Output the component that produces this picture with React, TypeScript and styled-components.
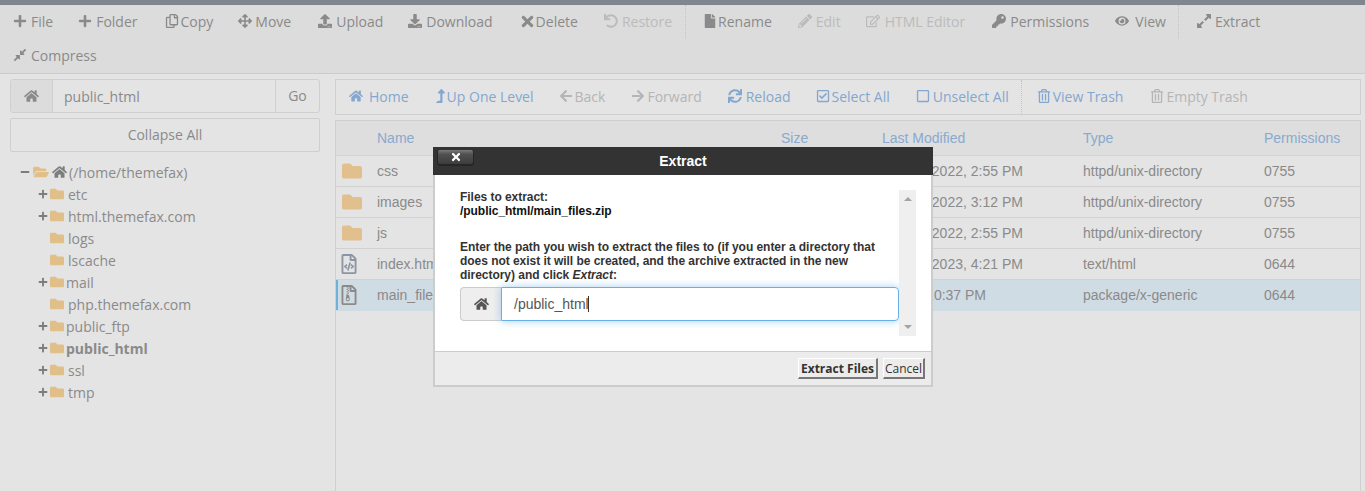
import * as React from 'react';
import styled, { createGlobalStyle } from 'styled-components';
import {
	FaPlus, FaRegCopy, FaArrowsAlt, FaUpload, FaDownload, FaTimes, FaUndo, FaFile, FaPencilAlt, FaRegEdit, FaKey, FaEye,
	FaExpandAlt, FaCompressAlt, FaHome, FaLevelUpAlt, FaArrowLeft, FaArrowRight, FaSync, FaRegCheckSquare, FaRegSquare,
	FaRegTrashAlt, FaFolder, FaFolderOpen, FaRegFileCode, FaRegFileArchive, FaMinus,
} from 'react-icons/fa';

const GlobalStyle = createGlobalStyle`
	html, body { margin: 0; padding: 0; height: 100%; overflow: hidden; background: #e4e4e4; }
	#root { height: 491px; }
`;

const Page = styled.div`
	position: relative;
	height: 491px;
	width: 1365px;
	overflow: hidden;
	border-top: 5px solid #7f868f;
	box-sizing: border-box;
	font-family: 'Open Sans', sans-serif;
	font-size: 14px;
	color: #8a8a8a;
`;
const TopToolbar = styled.div`
	display: flex;
	flex-wrap: wrap;
	align-content: flex-start;
	height: 69px;
	box-sizing: border-box;
	background: #dcdcdc;
	border-bottom: 1px solid #cbcbcb;
`;
const ToolItem = styled.span<{ $off?: boolean; $pad: number }>`
	display: inline-flex;
	align-items: center;
	height: 34px;
	box-sizing: border-box;
	padding: 0 0 2px ${p => p.$pad}px;
	color: ${p => (p.$off ? '#bbbbbb' : '#8a8a8a')};
	white-space: nowrap;
`;
const IconSlot = styled.span<{ $w: number; $h?: number }>`
	flex: none;
	display: flex;
	align-items: center;
	width: ${p => p.$w}px;
	svg { height: ${p => p.$h ?? 14}px; width: auto; }
`;
const BarDivider = styled.span<{ $pad: number }>`
	width: 0;
	height: 34px;
	margin-left: ${p => p.$pad}px;
	border-left: 1px dotted #c4c4c4;
`;
const RowBreak = styled.span`
	flex-basis: 100%;
	height: 0;
`;
const Body = styled.div`
	display: flex;
	align-items: flex-start;
	padding: 5px 4px 0 10px;
	gap: 15px;
`;
const Sidebar = styled.div`
	width: 310px;
	flex: none;
`;
const PathGroup = styled.div`
	display: flex;
	height: 34px;
	box-sizing: border-box;
	border: 1px solid #cfcfcf;
	border-radius: 3px;
`;
const PathAddon = styled.span`
	width: 41px;
	display: flex;
	align-items: center;
	justify-content: center;
	background: #dcdcdc;
	border-right: 1px solid #cfcfcf;
	svg { width: 15px; height: 14px; }
`;
const PathInput = styled.span`
	flex: 1;
	padding-left: 11px;
	line-height: 34px;
`;
const GoButton = styled.span`
	width: 43px;
	text-align: center;
	line-height: 32px;
	border-left: 1px solid #cfcfcf;
`;
const CollapseButton = styled.div`
	margin-top: 5px;
	height: 34px;
	box-sizing: border-box;
	border: 1px solid #cfcfcf;
	border-radius: 2px;
	text-align: center;
	line-height: 31px;
`;
const Tree = styled.ul`
	list-style: none;
	margin: 9px 0 0;
	padding: 0 0 0 10px;
`;
const TreeRow = styled.li<{ $bold?: boolean; $root?: boolean }>`
	display: flex;
	align-items: center;
	height: 22px;
	font-weight: ${p => (p.$bold ? 700 : 400)};
	padding-left: ${p => (p.$root ? 0 : 18)}px;
`;
const Toggle = styled.span`
	width: 12px;
	display: flex;
	align-items: center;
	color: #7d7d7d;
	svg { width: 10px; height: 10px; }
`;
const TreeFolder = styled.span<{ $tight?: boolean }>`
	display: flex;
	margin-right: ${p => (p.$tight ? 2 : 4)}px;
	color: #e1bf89;
	svg { width: 14px; height: 14px; }
`;
const RootIcons = styled.span`
	display: flex;
	align-items: center;
	gap: 2px;
	margin-right: 2px;
	svg:first-child { width: 18px; height: 14px; color: #e1bf89; }
	svg:last-child { width: 15px; height: 14px; color: #7d7d7d; }
`;
const Main = styled.div`
	flex: 1;
	min-width: 0;
`;
const FileToolbar = styled.div`
	display: flex;
	height: 36px;
	box-sizing: border-box;
	border: 1px solid #cfcfcf;
`;
const LinkItem = styled(ToolItem)<{ $off?: boolean }>`
	color: ${p => (p.$off ? '#b5b5b5' : '#83a7cf')};
`;
const FilePanel = styled.div`
	margin-top: 5px;
	height: 380px;
	border: 1px solid #cfcfcf;
	border-bottom: 0;
	font-family: 'Liberation Sans', Arial, sans-serif;
`;
const Row = styled.div<{ $head?: boolean; $selected?: boolean }>`
	display: grid;
	grid-template-columns: 41px 404px 101px 201px 181px 1fr;
	align-items: center;
	height: ${p => (p.$head ? 34 : 30)}px;
	border-bottom: 1px solid ${p => (p.$selected ? '#d0dce4' : '#d2d2d2')};
	background: ${p => (p.$head ? '#dedede' : p.$selected ? '#d0dce4' : 'transparent')};
	color: ${p => (p.$head ? '#8aa9cf' : '#8a8a8a')};
	box-shadow: ${p => (p.$selected ? 'inset 2px 0 0 #6eb2d6' : 'none')};
`;
const FileIcon = styled.span<{ $folder?: boolean; $zip?: boolean }>`
	display: flex;
	justify-content: center;
	padding-right: ${p => (p.$folder ? 10 : 16)}px;
	color: ${p => (p.$folder ? '#e1c08d' : p.$zip ? '#8c8a88' : '#8d94a3')};
	svg { width: ${p => (p.$folder ? 20 : 16)}px; height: 20px; }
`;
const Overlay = styled.div`
	position: absolute;
	left: 433px;
	top: 142px;
	width: 500px;
	height: 240px;
	box-sizing: border-box;
	display: flex;
	flex-direction: column;
	font-family: 'Liberation Sans', Arial, sans-serif;
	border: 2px solid #cccccc;
	border-top: 0;
	background: #ffffff;
`;
const ModalHead = styled.div`
	position: relative;
	height: 28px;
	margin: 0 -2px;
	background: #333333;
	color: #ffffff;
	font-size: 14px;
	font-weight: 700;
	text-align: center;
	line-height: 28px;
`;
const CloseButton = styled.span`
	position: absolute;
	left: 5px;
	top: 3px;
	width: 35px;
	height: 14px;
	display: flex;
	align-items: center;
	justify-content: center;
	border-radius: 2px;
	background: linear-gradient(#7c7c7c, #505050 30%, #3d3d3d);
	box-shadow: 0 1px 0 1px #262626;
	svg { width: 12px; height: 12px; color: #ffffff; }
`;
const ModalBody = styled.div`
	flex: 1;
	position: relative;
	padding: 15px 32px 0 25px;
	font-size: 12px;
	font-weight: 700;
	line-height: 14px;
	letter-spacing: -0.04px;
	color: #333333;
`;
const PathLine = styled.div`
	color: #111111;
	margin-bottom: 22px;
`;
const ExtractGroup = styled.div`
	display: flex;
	height: 34px;
	margin-top: 5px;
	font-size: 14px;
	font-weight: 400;
	letter-spacing: 0;
`;
const ExtractAddon = styled.span`
	width: 41px;
	display: flex;
	align-items: center;
	justify-content: center;
	box-sizing: border-box;
	border: 1px solid #cccccc;
	border-right: 0;
	border-radius: 4px 0 0 4px;
	background: #eeeeee;
	color: #555555;
	svg { width: 15px; height: 14px; }
`;
const ExtractInput = styled.span`
	flex: 1;
	box-sizing: border-box;
	padding-left: 12px;
	line-height: 32px;
	color: #555555;
	border: 1px solid #66afe9;
	border-radius: 0 4px 4px 0;
	box-shadow: 0 0 8px rgba(102, 175, 233, 0.6);
`;
const Caret = styled.span`
	display: inline-block;
	width: 1px;
	height: 16px;
	margin-left: -1px;
	vertical-align: -3px;
	background: #333333;
`;
const ScrollTrack = styled.div`
	position: absolute;
	right: 15px;
	top: 15px;
	bottom: 15px;
	width: 17px;
	display: flex;
	flex-direction: column;
	justify-content: space-between;
	align-items: center;
	padding: 7px 0;
	box-sizing: border-box;
	background: #efefef;
`;
const ScrollArrow = styled.span<{ $down?: boolean }>`
	width: 0;
	height: 0;
	border-left: 4px solid transparent;
	border-right: 4px solid transparent;
	${p => (p.$down ? 'border-top: 4px solid #a3a3a3;' : 'border-bottom: 4px solid #a3a3a3;')}
`;
const ModalFoot = styled.div`
	display: flex;
	justify-content: flex-end;
	align-items: flex-start;
	gap: 5px;
	height: 34px;
	box-sizing: border-box;
	padding: 6px 6px 0 0;
	background: #ececec;
	border-top: 1px solid #cccccc;
`;
const ModalButton = styled.span<{ $bold?: boolean }>`
	height: 21px;
	width: ${p => (p.$bold ? 80 : 42)}px;
	box-sizing: border-box;
	background: #ececec;
	border-style: solid;
	border-width: 1px 2px 2px 1px;
	border-color: #ffffff #777777 #777777 #ffffff;
	color: #333333;
	font-family: 'Open Sans', sans-serif;
	font-size: 12px;
	font-weight: ${p => (p.$bold ? 700 : 400)};
	text-align: center;
	line-height: 19px;
	white-space: nowrap;
`;

type BarItem = { icon: React.ReactNode; label: string; pad: number; slot: number; h?: number; off?: boolean };

const topItems: BarItem[] = [
	{ icon: <FaPlus />, label: 'File', pad: 13, slot: 18 },
	{ icon: <FaPlus />, label: 'Folder', pad: 25, slot: 18 },
	{ icon: <FaRegCopy />, label: 'Copy', pad: 27, slot: 16 },
	{ icon: <FaArrowsAlt />, label: 'Move', pad: 25, slot: 17 },
	{ icon: <FaUpload />, label: 'Upload', pad: 27, slot: 18 },
	{ icon: <FaDownload />, label: 'Download', pad: 25, slot: 18 },
	{ icon: <FaTimes />, label: 'Delete', pad: 26, slot: 17, h: 17 },
	{ icon: <FaUndo />, label: 'Restore', pad: 26, slot: 18, off: true },
];
const topItems2: BarItem[] = [
	{ icon: <FaFile />, label: 'Rename', pad: 17, slot: 15 },
	{ icon: <FaPencilAlt />, label: 'Edit', pad: 26, slot: 18, off: true },
	{ icon: <FaRegEdit />, label: 'HTML Editor', pad: 25, slot: 19, off: true },
	{ icon: <FaKey />, label: 'Permissions', pad: 27, slot: 18 },
	{ icon: <FaEye />, label: 'View', pad: 26, slot: 20 },
];
const navItems: BarItem[] = [
	{ icon: <FaHome />, label: 'Home', pad: 13, slot: 20 },
	{ icon: <FaLevelUpAlt />, label: 'Up One Level', pad: 25, slot: 13 },
	{ icon: <FaArrowLeft />, label: 'Back', pad: 25, slot: 16, off: true },
	{ icon: <FaArrowRight />, label: 'Forward', pad: 26, slot: 16, off: true },
	{ icon: <FaSync />, label: 'Reload', pad: 26, slot: 18 },
	{ icon: <FaRegCheckSquare />, label: 'Select All', pad: 25, slot: 16 },
	{ icon: <FaRegSquare />, label: 'Unselect All', pad: 26, slot: 17 },
];
const treeItems = [
	{ name: 'etc', plus: true },
	{ name: 'html.themefax.com', plus: true },
	{ name: 'logs' },
	{ name: 'lscache' },
	{ name: 'mail', plus: true, tight: true },
	{ name: 'php.themefax.com' },
	{ name: 'public_ftp', plus: true, tight: true },
	{ name: 'public_html', plus: true, tight: true, bold: true },
	{ name: 'ssl', plus: true },
	{ name: 'tmp', plus: true },
];
const files = [
	{ name: 'css', date: 'Jun 15, 2022, 2:55 PM', type: 'httpd/unix-directory', perm: '0755', icon: <FaFolder />, folder: true },
	{ name: 'images', date: 'Jun 15, 2022, 3:12 PM', type: 'httpd/unix-directory', perm: '0755', icon: <FaFolder />, folder: true },
	{ name: 'js', date: 'Jun 15, 2022, 2:55 PM', type: 'httpd/unix-directory', perm: '0755', icon: <FaFolder />, folder: true },
	{ name: 'index.html', date: 'Jan 10, 2023, 4:21 PM', type: 'text/html', perm: '0644', icon: <FaRegFileCode /> },
	{ name: 'main_files.zip', date: 'Today, 10:37 PM', type: 'package/x-generic', perm: '0644', icon: <FaRegFileArchive />, selected: true, zip: true },
];

const renderTool = (item: BarItem) => (
	<ToolItem key={item.label} $pad={item.pad} $off={item.off}>
		<IconSlot $w={item.slot} $h={item.h}>
			{item.icon}
		</IconSlot>
		{item.label}
	</ToolItem>
);

export default function App() {
	return (
		<Page>
			<GlobalStyle />
			<TopToolbar>
				{topItems.map(renderTool)}
				<BarDivider $pad={13} />
				{topItems2.map(renderTool)}
				<BarDivider $pad={12} />
				{renderTool({ icon: <FaExpandAlt />, label: 'Extract', pad: 17, slot: 19, h: 16 })}
				<RowBreak />
				{renderTool({ icon: <FaCompressAlt />, label: 'Compress', pad: 13, slot: 18 })}
			</TopToolbar>
			<Body>
				<Sidebar>
					<PathGroup>
						<PathAddon>
							<FaHome />
						</PathAddon>
						<PathInput>public_html</PathInput>
						<GoButton>Go</GoButton>
					</PathGroup>
					<CollapseButton>Collapse All</CollapseButton>
					<Tree>
						<TreeRow $root>
							<Toggle>
								<FaMinus />
							</Toggle>
							<RootIcons>
								<FaFolderOpen />
								<FaHome />
							</RootIcons>
							(/home/themefax)
						</TreeRow>
						{treeItems.map(item => (
							<TreeRow key={item.name} $bold={item.bold}>
								<Toggle>{item.plus && <FaPlus />}</Toggle>
								<TreeFolder $tight={item.tight}>
									<FaFolder />
								</TreeFolder>
								{item.name}
							</TreeRow>
						))}
					</Tree>
				</Sidebar>
				<Main>
					<FileToolbar>
						{navItems.map(item => (
							<LinkItem key={item.label} $pad={item.pad} $off={item.off}>
								<IconSlot $w={item.slot}>{item.icon}</IconSlot>
								{item.label}
							</LinkItem>
						))}
						<BarDivider $pad={12} />
						<LinkItem $pad={15}>
							<IconSlot $w={16}>
								<FaRegTrashAlt />
							</IconSlot>
							View Trash
						</LinkItem>
						<LinkItem $pad={27} $off>
							<IconSlot $w={16}>
								<FaRegTrashAlt />
							</IconSlot>
							Empty Trash
						</LinkItem>
					</FileToolbar>
					<FilePanel>
						<Row $head>
							<span />
							<span>Name</span>
							<span>Size</span>
							<span>Last Modified</span>
							<span>Type</span>
							<span>Permissions</span>
						</Row>
						{files.map(file => (
							<Row key={file.name} $selected={file.selected}>
								<FileIcon $folder={file.folder} $zip={file.zip}>
									{file.icon}
								</FileIcon>
								<span>{file.name}</span>
								<span />
								<span>{file.date}</span>
								<span>{file.type}</span>
								<span>{file.perm}</span>
							</Row>
						))}
					</FilePanel>
				</Main>
			</Body>
			<Overlay>
				<ModalHead>
					<CloseButton>
						<FaTimes />
					</CloseButton>
					Extract
				</ModalHead>
				<ModalBody>
					<div>Files to extract:</div>
					<PathLine>/public_html/main_files.zip</PathLine>
					<div>
						Enter the path you wish to extract the files to (if you enter a directory that does not exist it will be
						created, and the archive extracted in the new directory) and click <em>Extract</em>:
					</div>
					<ExtractGroup>
						<ExtractAddon>
							<FaHome />
						</ExtractAddon>
						<ExtractInput>
							/public_html
							<Caret />
						</ExtractInput>
					</ExtractGroup>
					<ScrollTrack>
						<ScrollArrow />
						<ScrollArrow $down />
					</ScrollTrack>
				</ModalBody>
				<ModalFoot>
					<ModalButton $bold>Extract Files</ModalButton>
					<ModalButton>Cancel</ModalButton>
				</ModalFoot>
			</Overlay>
		</Page>
	);
}
